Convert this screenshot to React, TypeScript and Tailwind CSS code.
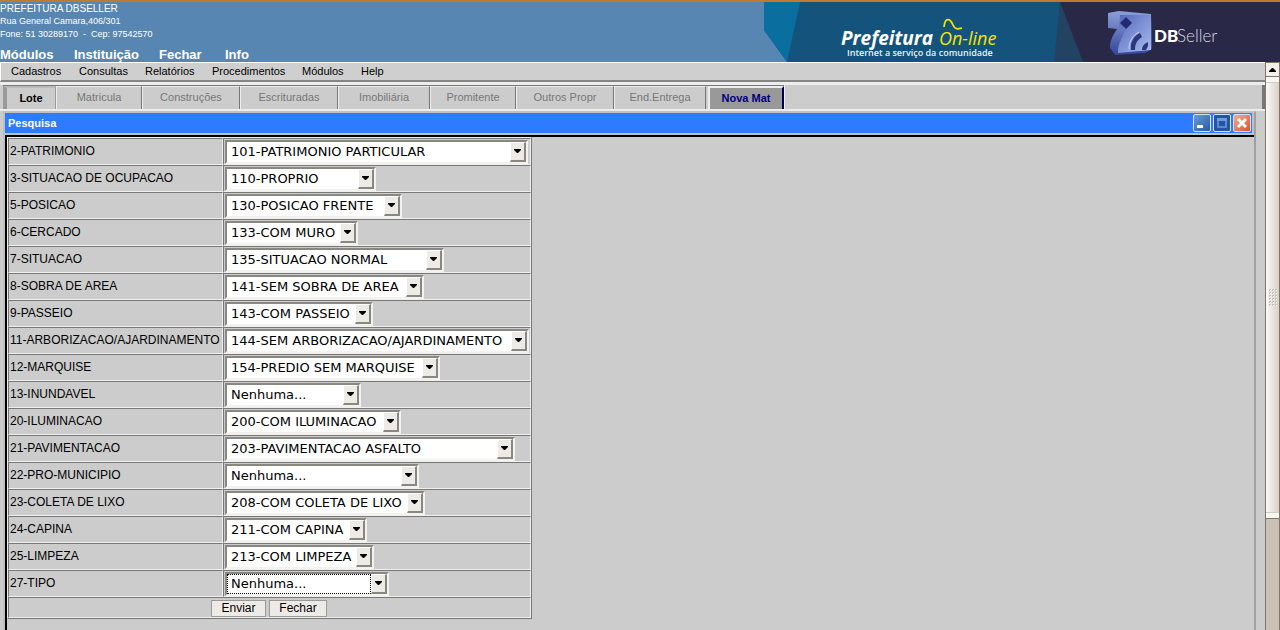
import type { ReactNode } from 'react';

const modules = [
  { label: 'Módulos', cls: 'w-[74px]' },
  { label: 'Instituição', cls: 'w-[85px]' },
  { label: 'Fechar', cls: 'w-[66px]' },
  { label: 'Info', cls: 'w-[60px]' },
];

const menu = [
  { label: 'Cadastros', cls: 'w-[68px]' },
  { label: 'Consultas', cls: 'w-[66px]' },
  { label: 'Relatórios', cls: 'w-[67px]' },
  { label: 'Procedimentos', cls: 'w-[90px]' },
  { label: 'Módulos', cls: 'w-[59px]' },
  { label: 'Help', cls: 'w-[40px]' },
];

const tabs = [
  { label: 'Matricula', cls: 'w-[86px]' },
  { label: 'Construções', cls: 'w-[98px]' },
  { label: 'Escrituradas', cls: 'w-[98px]' },
  { label: 'Imobiliária', cls: 'w-[92px]' },
  { label: 'Promitente', cls: 'w-[86px]' },
  { label: 'Outros Propr', cls: 'w-[98px]' },
  { label: 'End.Entrega', cls: 'w-[92px]' },
];

const fields = [
  { label: '2-PATRIMONIO', value: '101-PATRIMONIO PARTICULAR', cls: 'w-[303px]' },
  { label: '3-SITUACAO DE OCUPACAO', value: '110-PROPRIO', cls: 'w-[151px]' },
  { label: '5-POSICAO', value: '130-POSICAO FRENTE', cls: 'w-[177px]' },
  { label: '6-CERCADO', value: '133-COM MURO', cls: 'w-[133px]' },
  { label: '7-SITUACAO', value: '135-SITUACAO NORMAL', cls: 'w-[219px]' },
  { label: '8-SOBRA DE AREA', value: '141-SEM SOBRA DE AREA', cls: 'w-[199px]' },
  { label: '9-PASSEIO', value: '143-COM PASSEIO', cls: 'w-[148px]' },
  { label: '11-ARBORIZACAO/AJARDINAMENTO', value: '144-SEM ARBORIZACAO/AJARDINAMENTO', cls: 'w-[304px]' },
  { label: '12-MARQUISE', value: '154-PREDIO SEM MARQUISE', cls: 'w-[215px]' },
  { label: '13-INUNDAVEL', value: 'Nenhuma...', cls: 'w-[136px]' },
  { label: '20-ILUMINACAO', value: '200-COM ILUMINACAO', cls: 'w-[176px]' },
  { label: '21-PAVIMENTACAO', value: '203-PAVIMENTACAO ASFALTO', cls: 'w-[290px]' },
  { label: '22-PRO-MUNICIPIO', value: 'Nenhuma...', cls: 'w-[194px]' },
  { label: '23-COLETA DE LIXO', value: '208-COM COLETA DE LIXO', cls: 'w-[200px]' },
  { label: '24-CAPINA', value: '211-COM CAPINA', cls: 'w-[142px]' },
  { label: '25-LIMPEZA', value: '213-COM LIMPEZA', cls: 'w-[149px]' },
  { label: '27-TIPO', value: 'Nenhuma...', cls: 'w-[164px]', focused: true },
];

const cell = 'border border-t-[#777] border-l-[#777] border-r-[#f0f0f0] border-b-[#f0f0f0]';

function Banner() {
  return (
    <svg className="h-[60px] w-[516px] shrink-0" viewBox="0 0 516 60" role="img" aria-label="Prefeitura On-line, DBSeller">
      <defs>
        <linearGradient id="cube" x1="0" y1="0" x2="1" y2="1">
          <stop offset="0" stopColor="#5268b8" />
          <stop offset="0.5" stopColor="#7d92d6" />
          <stop offset="1" stopColor="#a9bbec" />
        </linearGradient>
        <linearGradient id="side" x1="0" y1="0" x2="0" y2="1">
          <stop offset="0" stopColor="#8d9fd8" />
          <stop offset="1" stopColor="#34459b" />
        </linearGradient>
      </defs>
      <path d="M0 0H516V60H23L0 28Z" fill="#14547c" />
      <path d="M0 0H36L23 60L0 28Z" fill="#0a6e9f" />
      <path d="M296 0H516V60H290Z" fill="#234363" />
      <path d="M296 0H516V60H319Z" fill="#292846" />
      <text x="77" y="43" fontFamily="'Open Sans', sans-serif" fontSize="19" fontWeight="700" fontStyle="italic" fill="#fff">Prefeitura</text>
      <text x="175" y="43" fontFamily="'Open Sans', sans-serif" fontSize="18" fontStyle="italic" fill="#f5e400">On-line</text>
      <path d="M180 25C181 15 186 16 189 23C191 28 194 27 198 26" fill="none" stroke="#f5e400" strokeWidth="1.8" />
      <text x="83" y="54" fontFamily="'Open Sans', sans-serif" fontSize="9" fontWeight="600" fill="#e8f0f5">Internet a serviço da comunidade</text>
      <path d="M344 11L355 9L387 12L388 47L381 51L351 53L346 46C346 38 349 33 353 27L344 26Z" fill="url(#side)" />
      <path d="M356 13L387 13V48L354 51C353 42 360 34 361 27L355 26Z" fill="url(#cube)" />
      <path d="M362 15L368 21L362 27L356 21Z" fill="#252a70" />
      <path d="M367 48C366 40 370 34 376 31L378 35C373 38 371 42 371 48Z" fill="#2b367f" />
      <path d="M378 48C378 44 380 42 384 40V44L382 48Z" fill="#2b367f" />
      <path d="M365 47C365 39 369 33 375 30" fill="none" stroke="#c5d3ff" />
      <text x="390" y="40" fontFamily="Lato, sans-serif" fontSize="17" fontWeight="900" fill="#fff">DB</text>
      <text x="413" y="40" fontFamily="Lato, sans-serif" fontSize="17" fontWeight="300" fill="#d7d7e2">Seller</text>
    </svg>
  );
}

function WindowButton({ label, cls, children }: { label: string; cls: string; children: ReactNode }) {
  return (
    <button type="button" aria-label={label} className={`size-[18px] rounded-[2px] border border-[#d8e2f4] ${cls}`}>
      <svg viewBox="0 0 16 16" className="size-4">{children}</svg>
    </button>
  );
}

function Field({ id, value, cls, focused }: { id: string; value: string; cls: string; focused?: boolean }) {
  return (
    <div className={`relative h-6 ${cls}`}>
      <select
        id={id}
        className="block h-6 w-full appearance-none rounded-none border-2 border-t-[#888780] border-r-[#f3f2ef] border-b-[#f3f2ef] border-l-[#888780] bg-white pr-5 pl-1 font-['DejaVu_Sans',sans-serif] text-[13px] leading-5 text-black outline-none"
      >
        <option>{value}</option>
      </select>
      {focused && <span className="pointer-events-none absolute inset-y-[2px] right-[18px] left-[2px] border border-dotted border-black" />}
      <span className="pointer-events-none absolute inset-y-[2px] right-[2px] flex w-4 items-center justify-center border-t border-r-2 border-b-2 border-l border-t-white border-r-[#888780] border-b-[#888780] border-l-white bg-[#eeebe7]">
        <svg viewBox="0 0 7 4" className="h-1 w-[7px] shrink-0"><path d="M0 0H7V1L4 4H3L0 1Z" /></svg>
      </span>
    </div>
  );
}

export default function App() {
  return (
    <div className="flex h-screen flex-col overflow-hidden bg-[#ccc] font-['Liberation_Sans',Arial,sans-serif] text-black">
      <header className="flex shrink-0 justify-between border-t-2 border-[#c17a32] bg-[#5886b2] text-white">
        <div className="flex h-[60px] flex-col">
          <address className="text-[9px] leading-[13px] whitespace-pre not-italic">
            <p className="text-[10px] leading-[13px]">PREFEITURA DBSELLER</p>
            <p>Rua General Camara,406/301</p>
            <p>Fone: 51 30289170  -  Cep: 97542570</p>
          </address>
          <nav className="flex pt-[6px] text-[13px] leading-4 font-bold">
            {modules.map((m) => <a key={m.label} href="#" className={m.cls}>{m.label}</a>)}
          </nav>
        </div>
        <Banner />
      </header>

      <div className="flex min-h-0 flex-1">
        <main className="flex min-w-0 flex-1 flex-col">
          <nav className="flex h-5 shrink-0 border-t border-b-2 border-l border-t-white border-b-[#858585] border-l-white bg-[#cfcfcf] pl-[10px] text-[11px] leading-[17px]">
            {menu.map((m) => <a key={m.label} href="#" className={m.cls}>{m.label}</a>)}
          </nav>

          <div className="flex h-[29px] shrink-0 border-t-3 border-b-2 border-[#ededed] pl-[3px]">
            <div role="tablist" className="flex border-t border-[#777] text-[11px] leading-[21px]">
              <button type="button" role="tab" aria-selected="true" className="w-[53px] border-t-2 border-r border-l-4 border-t-[#bbb] border-r-[#999] border-l-[#999] bg-[#ccc] font-bold">Lote</button>
              {tabs.map((t) => (
                <button key={t.label} type="button" role="tab" aria-selected="false" className={`border-t border-r border-l border-t-[#eee] border-r-[#777] border-l-[#eee] pb-px text-[#777] ${t.cls}`}>{t.label}</button>
              ))}
              <button type="button" role="tab" aria-selected="false" className="ml-[2px] w-[76px] border-t-2 border-r-2 border-l-2 border-t-[#eee] border-r-[#000050] border-l-[#eee] bg-[#999] font-bold text-[#000080]">Nova Mat</button>
            </div>
            <div className="flex-1 border-r-3 border-l border-r-[#777] border-l-[#eee]" />
          </div>

          <section className="mr-[9px] ml-[3px] flex min-h-0 flex-1 flex-col border-t-2 border-r-2 border-l-2 border-t-[#c0c0c0] border-r-[#a0a0a0] border-l-[#c0c0c0]">
            <div className="flex h-[22px] shrink-0 items-center justify-between border-r-2 border-b-2 border-[#c0c0c0] bg-[#2e7bff] pr-px pl-[3px]">
              <h1 className="text-[11px] leading-[18px] font-bold text-white">Pesquisa</h1>
              <div className="flex gap-[2px]">
                <WindowButton label="Minimizar" cls="bg-linear-to-br from-[#6d9bd1] to-[#215cab]"><path d="M3 10H9V13H3Z" fill="#fff" /></WindowButton>
                <WindowButton label="Maximizar" cls="bg-[#2355a3]"><path d="M4 4H12V12H4Z" fill="none" stroke="#6f9add" strokeWidth="1.500" /><path d="M3 3H13V6H3Z" fill="#6f9add" /></WindowButton>
                <WindowButton label="Fechar janela" cls="bg-linear-to-br from-[#f0aa93] to-[#d8502c]"><path d="M4 4L12 12M12 4L4 12" stroke="#fff" strokeWidth="3" /></WindowButton>
              </div>
            </div>
            <form className="min-h-0 flex-1 overflow-hidden border-t-2 border-l-2 border-black" onSubmit={(e) => e.preventDefault()}>
              <table className="w-[525px] table-fixed border-separate border-spacing-0 border border-t-[#eee] border-r-[#777] border-b-[#777] border-l-[#eee] text-[12px] leading-4">
                <colgroup><col className="w-[215px]" /><col /></colgroup>
                <tbody>
                  {fields.map((f) => (
                    <tr key={f.label} className="h-[27px]">
                      <td className={`px-px pt-0 pb-px whitespace-nowrap ${cell}`}><label htmlFor={f.label} className="block">{f.label}</label></td>
                      <td className={`px-px py-0 ${cell}`}><Field id={f.label} value={f.value} cls={f.cls} focused={f.focused} /></td>
                    </tr>
                  ))}
                  <tr className="h-[21px]">
                    <td colSpan={2} className={`px-0 pt-px pb-0 ${cell}`}>
                      <div className="flex justify-center gap-[3px] pr-px">
                        <button type="submit" className="h-[17px] w-[55px] border border-[#999] bg-[#eeebe7] leading-[15px]">Enviar</button>
                        <button type="button" className="h-[17px] w-[58px] border border-[#999] bg-[#eeebe7] leading-[15px]">Fechar</button>
                      </div>
                    </td>
                  </tr>
                </tbody>
              </table>
            </form>
          </section>
        </main>

        <aside aria-hidden="true" className="flex w-[15px] shrink-0 flex-col border-x border-t border-[#82766a] bg-[#cac0b6]">
          <div className="flex h-[14px] items-center justify-center border-b border-[#82766a] bg-[#f3f0ec]">
            <svg viewBox="0 0 7 4" className="h-1 w-[7px]"><path d="M3 0H4L7 3V4H0V3Z" /></svg>
          </div>
          <div className="flex h-[442px] flex-col justify-between border-b border-[#82766a] bg-linear-to-r from-[#fbfaf9] to-[#d9d0ca]">
            <div className="h-[6px] border-b border-[#d0cec0] bg-[#f8f6f3]" />
            <div className="grid grid-cols-3 gap-px self-center">
              {Array.from({ length: 18 }, (_, i) => <span key={i} className="size-[2px] border-t border-l border-t-[#c8c0b8] border-l-[#c8c0b8] bg-white" />)}
            </div>
            <div className="h-[6px] border-t border-[#d0cec0] bg-[#f8f6f3]" />
          </div>
        </aside>
      </div>
    </div>
  );
}
